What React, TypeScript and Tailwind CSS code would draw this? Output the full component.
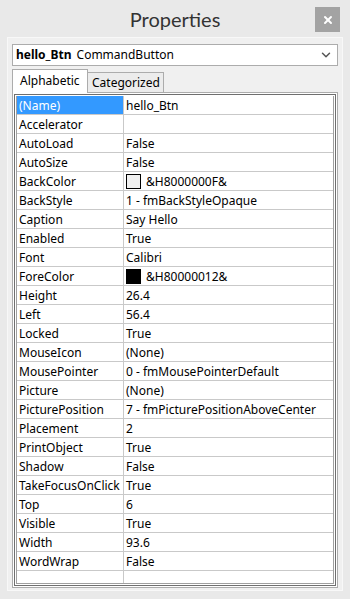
import { ChevronDown, X } from 'lucide-react';

type Prop = { name: string; value: string; swatch?: string };

const PROPS: Prop[] = [
  { name: '(Name)', value: 'hello_Btn' },
  { name: 'Accelerator', value: '' },
  { name: 'AutoLoad', value: 'False' },
  { name: 'AutoSize', value: 'False' },
  { name: 'BackColor', value: '&H8000000F&', swatch: 'bg-[#f0f0f0]' },
  { name: 'BackStyle', value: '1 - fmBackStyleOpaque' },
  { name: 'Caption', value: 'Say Hello' },
  { name: 'Enabled', value: 'True' },
  { name: 'Font', value: 'Calibri' },
  { name: 'ForeColor', value: '&H80000012&', swatch: 'bg-black' },
  { name: 'Height', value: '26.4' },
  { name: 'Left', value: '56.4' },
  { name: 'Locked', value: 'True' },
  { name: 'MouseIcon', value: '(None)' },
  { name: 'MousePointer', value: '0 - fmMousePointerDefault' },
  { name: 'Picture', value: '(None)' },
  { name: 'PicturePosition', value: '7 - fmPicturePositionAboveCenter' },
  { name: 'Placement', value: '2' },
  { name: 'PrintObject', value: 'True' },
  { name: 'Shadow', value: 'False' },
  { name: 'TakeFocusOnClick', value: 'True' },
  { name: 'Top', value: '6' },
  { name: 'Visible', value: 'True' },
  { name: 'Width', value: '93.6' },
  { name: 'WordWrap', value: 'False' },
];

export default function App() {
  return (
    <div className="w-[350px] h-[599px] bg-[#e9e9e9] flex flex-col font-['Noto_Sans','Liberation_Sans',sans-serif] text-black overflow-hidden">
      {/* Title bar */}
      <div className="h-[37px] shrink-0 grid grid-cols-[1fr_auto_1fr] items-start pt-[7px]">
        <div />
        <div className="font-['Lato','Noto_Sans',sans-serif] text-[20px] leading-[25px] text-[#333333]">Properties</div>
        <button className="justify-self-end mr-[10px] w-[25px] h-[25px] bg-[#a3a3a3] flex items-center justify-center">
          <X className="w-[12px] h-[12px] text-white" strokeWidth={4} />
        </button>
      </div>

      {/* Panel */}
      <div className="mx-[7px] mb-[8px] flex-1 min-h-0 flex flex-col border border-[#f8f8f8] bg-[#f0f0f0] px-[4px] pt-[6px] pb-[2px]">
        {/* Object dropdown */}
        <div className="h-[22px] shrink-0 border border-[#acacac] bg-white flex items-center pl-[3px] pr-[4px] text-[12px] leading-none">
          <span className="font-bold">hello_Btn</span>
          <span className="ml-[5px]">CommandButton</span>
          <ChevronDown className="ml-auto w-[14px] h-[14px] text-[#555555]" strokeWidth={2.5} />
        </div>

        {/* Tabs */}
        <div className="mt-[3px] shrink-0 flex items-end relative z-10 -mb-px">
          <div className="w-[76px] h-[24px] border border-[#acacac] border-b-0 bg-white pl-[7px] pt-[3px] text-[12px] leading-[16px]">
            Alphabetic
          </div>
          <div className="-ml-px w-[77px] h-[21px] border border-[#acacac] bg-[#ececec] pl-[4px] pt-[2px] text-[12px] leading-[16px]">
            Categorized
          </div>
        </div>

        {/* Grid frame */}
        <div className="flex-1 min-h-0 flex flex-col border border-[#acacac] bg-white p-px">
          <div className="flex-1 min-h-0 flex flex-col border border-[#6f6f6f] bg-white p-px">
            <div className="flex-1 min-h-0 flex flex-col border border-[#a0a0a0] border-t-0 bg-white overflow-hidden">
              {PROPS.map((p, i) => (
                <div key={p.name} className="h-[19px] flex border-b border-[#c9c9c9] text-[12px] leading-[18px] shrink-0">
                  <div
                    className={
                      i === 0
                        ? 'w-[107px] pl-[2px] pt-px bg-[#3399ff] text-white border-r border-[#c9c9c9] whitespace-nowrap'
                        : 'w-[107px] pl-[2px] pt-px border-r border-[#c9c9c9] whitespace-nowrap'
                    }
                  >
                    {p.name}
                  </div>
                  <div className="flex-1 pl-[2px] pt-px flex items-center whitespace-nowrap overflow-hidden">
                    {p.swatch && (
                      <span className={`w-[15px] h-[15px] -mt-px border border-black mr-[5px] ${p.swatch}`} />
                    )}
                    <span>{p.value}</span>
                  </div>
                </div>
              ))}
              <div className="h-[19px] flex shrink-0">
                <div className="w-[107px] border-r border-[#c9c9c9]" />
                <div className="flex-1" />
              </div>
            </div>
          </div>
        </div>
      </div>
    </div>
  );
}
